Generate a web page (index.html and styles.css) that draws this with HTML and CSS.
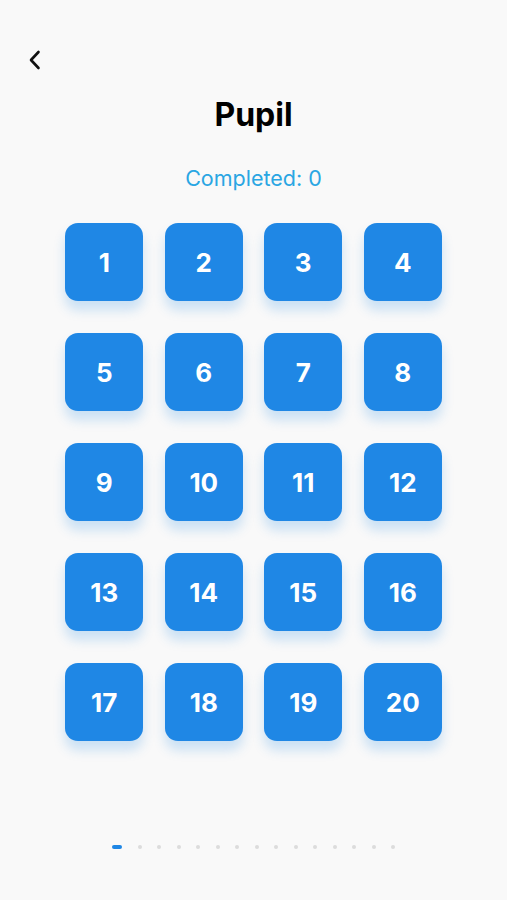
FILE: index.html
```html
<!DOCTYPE html>
<html>
<head>
<meta charset="utf-8">
<link rel="stylesheet" href="styles.css">
</head>
<body>
<div class="screen">
  <div class="topbar">
    <button class="back" aria-label="Back">
      <svg width="14" height="20" viewBox="0 0 14 20"><path d="M10.5 2 L3 10 L10.5 18" fill="none" stroke="#111" stroke-width="2.6" stroke-linecap="round" stroke-linejoin="round"/></svg>
    </button>
  </div>
  <h1 class="title">Pupil</h1>
  <div class="completed">Completed: 0</div>
  <div class="grid">
    <div class="tile">1</div><div class="tile">2</div><div class="tile">3</div><div class="tile">4</div>
    <div class="tile">5</div><div class="tile">6</div><div class="tile">7</div><div class="tile">8</div>
    <div class="tile">9</div><div class="tile">10</div><div class="tile">11</div><div class="tile">12</div>
    <div class="tile">13</div><div class="tile">14</div><div class="tile">15</div><div class="tile">16</div>
    <div class="tile">17</div><div class="tile">18</div><div class="tile">19</div><div class="tile">20</div>
  </div>
  <div class="dots">
    <span class="dot active"></span><span class="dot"></span><span class="dot"></span><span class="dot"></span><span class="dot"></span><span class="dot"></span><span class="dot"></span><span class="dot"></span><span class="dot"></span><span class="dot"></span><span class="dot"></span><span class="dot"></span><span class="dot"></span><span class="dot"></span><span class="dot"></span>
  </div>
</div>
</body>
</html>
```
FILE: styles.css
```css
html, body {
  margin: 0;
  padding: 0;
  background: #f9f9f9;
}
.screen {
  width: 507px;
  height: 900px;
  display: flex;
  flex-direction: column;
  font-family: Inter, "Noto Sans", sans-serif;
}
.topbar {
  height: 40px;
  margin-top: 40px;
  padding-left: 28px;
  display: flex;
  align-items: center;
}
.back {
  border: 0;
  background: none;
  padding: 0;
  width: 14px;
  height: 20px;
  display: flex;
}
.title {
  margin: 15px 0 0;
  text-align: center;
  font-size: 32px;
  line-height: 40px;
  font-weight: 700;
  color: #000;
}
.completed {
  margin-top: 29px;
  text-align: center;
  font-size: 21.5px;
  line-height: 28px;
  color: #2aa6e3;
}
.grid {
  margin-top: 31px;
  display: grid;
  grid-template-columns: repeat(4, 78px);
  grid-auto-rows: 78px;
  column-gap: 21.5px;
  row-gap: 32px;
  justify-content: center;
}
.tile {
  background: #1f87e5;
  border-radius: 13px;
  color: #fff;
  font-size: 26px;
  font-weight: 700;
  display: flex;
  align-items: center;
  justify-content: center;
  box-shadow: 0 9px 12px rgba(30, 136, 229, 0.22);
}
.dots {
  margin-top: auto;
  margin-bottom: 51px;
  display: flex;
  justify-content: center;
  align-items: center;
  gap: 15.5px;
}
.dot {
  width: 4px;
  height: 4px;
  border-radius: 2px;
  background: #dcdcdc;
}
.dot.active {
  width: 10px;
  background: #1f87e5;
}
```
